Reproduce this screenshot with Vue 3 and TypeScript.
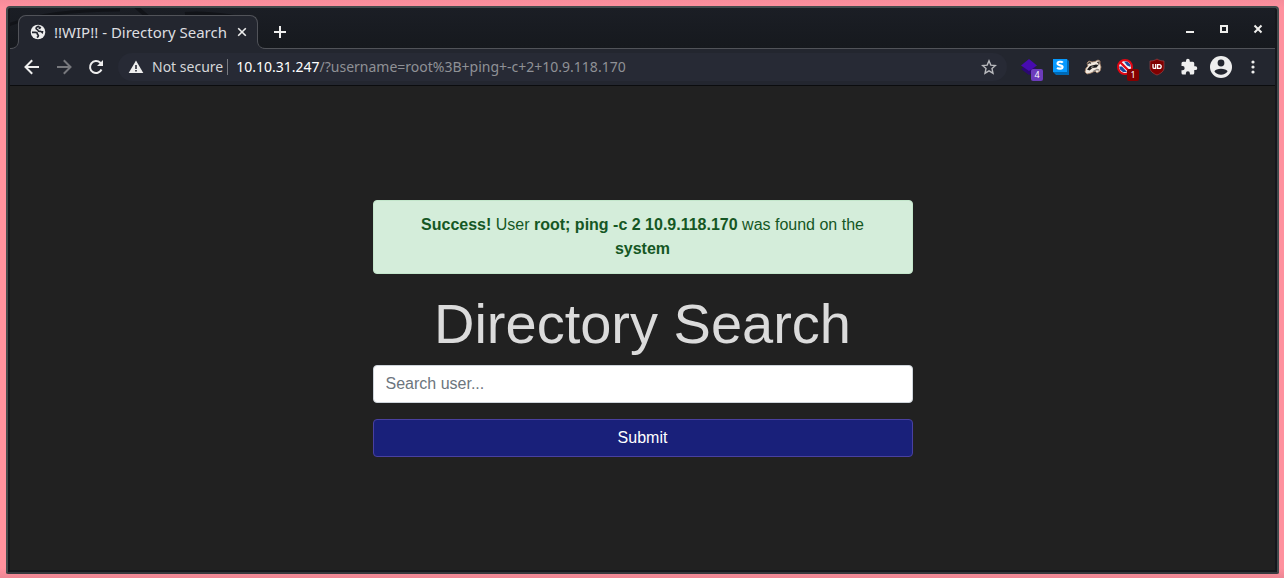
<script setup lang="ts">
import { ref } from 'vue'

const username = ref('')
const host = '10.10.31.247'
const query = '/?username=root%3B+ping+-c+2+10.9.118.170'
</script>

<template>
  <div class="desktop">
    <div class="window">
      <header class="titlebar">
        <svg class="swirl" width="260" height="42" viewBox="0 0 260 42" aria-hidden="true">
          <g fill="none" stroke="#111318">
            <path d="M-4 18C20 8 60 2 110 2" stroke-width="3" />
            <path d="M125-2l14 12M175 6c20-2 50 2 70 8" stroke-width="4" />
          </g>
        </svg>
        <div class="tab">
          <svg class="foot left" width="9" height="9" viewBox="0 0 9 9" aria-hidden="true"><path d="M0 8.500C5.500 8.500 8.500 6 8.500 0H9v9H0z" fill="#23262f" /><path d="M0 8.500C5.500 8.500 8.500 6 8.500 0" fill="none" stroke="#515359" /></svg>
          <svg class="foot right" width="9" height="9" viewBox="0 0 9 9" aria-hidden="true"><path d="M9 8.500C3.500 8.500.5 6 .5 0H0v9h9z" fill="#23262f" /><path d="M9 8.500C3.500 8.500.5 6 .5 0" fill="none" stroke="#515359" /></svg>
          <svg width="16" height="16" viewBox="0 0 16 16" aria-hidden="true">
            <circle cx="8" cy="8" r="7.300" fill="#eee" />
            <path d="M9.300 2.300C7 2.500 5.900 3.600 6.100 4.700 6.300 5.800 8 5.300 8.100 6.600 8.200 7.700 10.200 7.300 11.300 7.500M2 8.300h3.300c1.700 0 2.200 1 2.100 1.900-.1.800 1 .5 1 1.500 0 .8-.5 1.400-1.600 1.700" fill="none" stroke="#23262f" stroke-width="1.700" />
            <path d="M8.800 2.200l2.600.8-1.200 2.200-1.700-.4zM11 6.900l2.400.2-.6 3-1.600-1.300z" fill="#23262f" />
          </svg>
          <span class="tab-title">!!WIP!! - Directory Search</span>
          <button aria-label="Close tab">
            <svg width="10" height="10" viewBox="0 0 10 10"><path d="M1.200 1.200l7.600 7.600M8.800 1.200L1.200 8.800" stroke="#eee" stroke-width="1.600" /></svg>
          </button>
        </div>
        <button class="new-tab" aria-label="New tab">
          <svg width="14" height="14" viewBox="0 0 14 14"><path d="M7 1v12M1 7h12" stroke="#eee" stroke-width="2" /></svg>
        </button>
        <div class="controls">
          <button aria-label="Minimize"><svg width="10" height="10" viewBox="0 0 10 10"><path d="M1 7h8v2H1z" fill="#eeeeec" /></svg></button>
          <button aria-label="Maximize"><svg width="10" height="10" viewBox="0 0 10 10"><path d="M2 2h6v6H2z" fill="none" stroke="#eeeeec" stroke-width="2" /></svg></button>
          <button aria-label="Close"><svg width="10" height="10" viewBox="0 0 10 10"><path d="M1.500 1.500l7 7M8.500 1.500l-7 7" stroke="#eeeeec" stroke-width="2" /></svg></button>
        </div>
      </header>

      <nav class="toolbar" aria-label="Browser toolbar">
        <button class="tool" aria-label="Back">
          <svg width="20" height="20" viewBox="0 0 20 20"><path d="M17 10H4M10.200 3.300L3.500 10l6.700 6.700" fill="none" stroke="#eee" stroke-width="2" /></svg>
        </button>
        <button class="tool" aria-label="Forward" disabled>
          <svg width="20" height="20" viewBox="0 0 20 20"><path d="M3 10h13M9.800 3.300l6.700 6.700-6.700 6.700" fill="none" stroke="#77787d" stroke-width="2" /></svg>
        </button>
        <button class="tool" aria-label="Reload">
          <svg width="20" height="20" viewBox="0 0 20 20"><path d="M15.500 12.500A6 6 0 1 1 14.300 5.800L16 7.500" fill="none" stroke="#eee" stroke-width="2" /><path d="M17 3v6h-6z" fill="#eee" /></svg>
        </button>
        <div class="address">
          <button class="security">
            <svg width="16" height="16" viewBox="0 0 16 16" aria-hidden="true"><path d="M8 1.500L15.300 14H.7z" fill="#eee" /><path d="M7.200 6h1.600v4H7.200zM7.200 11h1.600v1.600H7.200z" fill="#272a35" /></svg>
            Not secure
          </button>
          <div class="url" role="textbox" aria-label="Address" contenteditable="true" spellcheck="false"><span class="host">{{ host }}</span>{{ query }}</div>
          <button aria-label="Bookmark this page">
            <svg width="16" height="16" viewBox="0 0 16 16"><path d="M8 1.800l1.800 4.300 4.700.4-3.500 3.100 1 4.600L8 11.800l-4 2.400 1-4.600L1.500 6.500l4.700-.4z" fill="none" stroke="#b8b9bd" stroke-width="1.400" /></svg>
          </button>
        </div>
        <div class="extensions">
          <button class="tool" aria-label="Layers extension">
            <svg width="18" height="18" viewBox="0 0 18 18"><path d="M1 11l8-5 8 5-8 6z" fill="#2b0872" /><path d="M1 7.500L9 1l8 6.500L9 13z" fill="#470bb0" /></svg>
            <span class="badge">4</span>
          </button>
          <button class="tool" aria-label="S extension">
            <svg width="18" height="18" viewBox="0 0 18 18"><path d="M1 1h14l2 2v14H4l-3-3z" fill="#0069b5" /><path d="M1 1h14v13H1z" fill="#079aff" /><path d="M10.800 4.600C9.800 3.400 5.500 3.300 5.500 5.600c0 2.500 5.100 1 5.100 3.400 0 2.200-4.300 2-5.500.7" fill="none" stroke="#fff" stroke-width="2.100" /></svg>
          </button>
          <button class="tool" aria-label="Badger extension">
            <svg width="18" height="18" viewBox="0 0 18 18">
              <path d="M1 14l1-4 2-2-1-3 2-2 3 1 3-.500 3-1.500 2 1v3l1 3-1 4-3 2-2-2-4 2-4 1z" fill="#f1e9df" stroke="#a78367" stroke-width=".8" />
              <path d="M3.500 6l2-1.800 1.500 1.300M13 4.500l2-.5-.3 2.500" fill="none" stroke="#443a36" stroke-width="1.200" />
              <path d="M3 11.500L6 8l6-1.500 2.500.5-2 2.500-4 .500-3 2.500z" fill="#1c1b1c" />
              <path d="M7 9.700l2.500-1.200M9 13.500l4-2 2 .5" fill="none" stroke="#8d8782" stroke-width="1.300" />
            </svg>
          </button>
          <button class="tool" aria-label="Blocker extension">
            <svg width="18" height="18" viewBox="0 0 18 18"><circle cx="9" cy="9" r="6.500" fill="#f4f4fa" /><path d="M8 3.500h3.500l3 3V9L11 7.500zM3 8.500h3l5 5.500H7L4 11.500z" fill="#1b489a" /><circle cx="9" cy="9" r="7" fill="none" stroke="#e30613" stroke-width="2" /><path d="M4 4l10 10" stroke="#e30613" stroke-width="2.400" /></svg>
            <span class="badge red">1</span>
          </button>
          <button class="tool" aria-label="Shield extension">
            <svg width="18" height="18" viewBox="0 0 18 18"><path d="M9 1c2 1.300 4 2 7 2v7c0 3-3 5.500-7 7-4-1.500-7-4-7-7V3c3 0 5-.7 7-2z" fill="#800000" stroke="#a34a4d" stroke-width=".6" /><path d="M5 6v3.200q0 1.200 1.300 1.200h1.400V6M9.600 6.600h1.600q2 0 2 1.900t-2 1.900H9.600V6" fill="none" stroke="#fff" stroke-width="1.300" /></svg>
          </button>
          <button class="tool" aria-label="Extensions">
            <svg width="18" height="18" viewBox="0 0 24 24"><path d="M20.500 11H19V7a2 2 0 0 0-2-2h-4V3.500a2.500 2.500 0 0 0-5 0V5H4a2 2 0 0 0-2 2v3.800h1.500a2.700 2.700 0 0 1 0 5.400H2V20a2 2 0 0 0 2 2h3.800v-1.500a2.700 2.700 0 0 1 5.400 0V22H17a2 2 0 0 0 2-2v-4h1.500a2.500 2.500 0 0 0 0-5z" fill="#eee" /></svg>
          </button>
          <button class="tool" aria-label="Profile">
            <svg width="22" height="22" viewBox="0 0 22 22"><circle cx="11" cy="11" r="11" fill="#eee" /><circle cx="11" cy="7" r="3.400" fill="#23262f" /><path d="M4.400 15.300C5.700 11.900 16.300 11.900 17.600 15.300 15.300 19.800 6.700 19.800 4.400 15.300z" fill="#23262f" /></svg>
          </button>
          <button class="tool" aria-label="Menu">
            <svg width="18" height="18" viewBox="0 0 18 18" fill="#eee"><circle cx="9" cy="4" r="1.600" /><circle cx="9" cy="9" r="1.600" /><circle cx="9" cy="14" r="1.600" /></svg>
          </button>
        </div>
      </nav>

      <main class="page">
        <form class="search" @submit.prevent>
          <div class="alert" role="alert">
            <strong>Success!</strong> User <strong>root; ping -c 2 10.9.118.170</strong> was found on the <strong>system</strong>
          </div>
          <h1>Directory Search</h1>
          <input v-model="username" type="text" name="username" placeholder="Search user..." aria-label="Search user" />
          <button class="submit" type="submit">Submit</button>
        </form>
      </main>
    </div>
  </div>
</template>

<style>
body {
  margin: 0;
}
</style>

<style scoped>
* {
  box-sizing: border-box;
}
button {
  margin: 0;
  padding: 0;
  border: 0;
  background: none;
  font: inherit;
  color: inherit;
}
svg {
  display: block;
  flex: none;
}
.desktop {
  display: flex;
  min-height: 100vh;
  padding: 6px 5px 4px 6px;
  background: linear-gradient(#f68c9a, #ff919e 8px, #ff919e calc(100% - 10px), #ed8694);
  font-family: "Noto Sans", sans-serif;
}
.window {
  flex: 1;
  display: flex;
  flex-direction: column;
  min-width: 0;
  padding: 0 2px 2px;
  border: 2px solid #434a4c;
  border-bottom-color: #35383e;
  border-radius: 4px 4px 2px 2px;
  background: #15171c;
}
.titlebar {
  position: relative;
  display: flex;
  align-items: flex-end;
  height: 41px;
  padding-left: 8px;
  border-bottom: 1px solid #515359;
  background: linear-gradient(#1b1e25, #16191e);
}
.swirl {
  position: absolute;
  top: 0;
  left: 0;
}
.tab {
  position: relative;
  display: flex;
  align-items: center;
  width: 240px;
  height: 34px;
  margin-bottom: -1px;
  padding: 0 10px 2px 11px;
  border: 1px solid #515359;
  border-bottom: 0;
  border-radius: 8px 8px 0 0;
  background: #23262f;
}
.foot {
  position: absolute;
  bottom: 0;
}
.foot.left {
  left: -9px;
}
.foot.right {
  right: -9px;
}
.tab-title {
  flex: 1;
  margin-left: 8px;
  font-size: 15px;
  line-height: 20px;
  color: #dedee0;
  white-space: nowrap;
}
.new-tab {
  margin: 0 0 9px 15px;
}
.controls {
  display: flex;
  gap: 24px;
  margin: 0 12px 14px auto;
}
.toolbar {
  display: flex;
  align-items: center;
  height: 37px;
  padding: 0 6px;
  border-bottom: 1px solid #0b0c0e;
  background: #23262f;
}
.tool {
  position: relative;
  display: grid;
  place-items: center;
  width: 32px;
  height: 28px;
}
.address {
  flex: 1;
  display: flex;
  align-items: center;
  min-width: 0;
  height: 28px;
  margin: 0 6px;
  padding: 0 10px;
  border-radius: 14px;
  background: #272a35;
  font-size: 14px;
  line-height: 20px;
}
.security {
  display: flex;
  align-items: center;
  gap: 8px;
  color: #d5d6d9;
  white-space: nowrap;
}
.url {
  flex: 1;
  min-width: 0;
  margin-left: 4px;
  padding-left: 8px;
  height: 16px;
  border-left: 1px solid #77797f;
  line-height: 16px;
  color: #8f9196;
  white-space: nowrap;
}
.host {
  color: #fff;
}
.extensions {
  display: flex;
}
.badge {
  position: absolute;
  right: 2px;
  bottom: 0;
  width: 12px;
  height: 12px;
  border-radius: 2px;
  background: #6c3cbb;
  color: #fff;
  font-size: 9px;
  line-height: 12px;
  text-align: center;
}
.badge.red {
  background: #850000;
}
.page {
  flex: 1;
  display: grid;
  place-items: center;
  background: #212121;
  color: #dbdbdb;
  font-family: "Liberation Sans", Arial, sans-serif;
  font-size: 16px;
  line-height: 24px;
}
.search {
  display: flex;
  flex-direction: column;
  width: 100%;
  max-width: 540px;
  text-align: center;
}
.alert {
  margin-bottom: 16px;
  padding: 12px 20px;
  border: 1px solid #c3e6cb;
  border-radius: 4px;
  background: #d4edda;
  color: #155724;
}
h1 {
  margin: 0 0 8px;
  font-size: 56px;
  font-weight: 400;
  line-height: 67px;
}
.search input {
  height: 38px;
  margin: 0 0 16px;
  padding: 6px 12px;
  border: 1px solid #ced4da;
  border-radius: 4px;
  background: #fff;
  color: #495057;
  font: inherit;
}
.search input::placeholder {
  color: #6c757d;
  opacity: 1;
}
.submit {
  height: 38px;
  border: 1px solid #4940a0;
  border-radius: 4px;
  background: #19207a;
  color: #fff;
}
</style>
